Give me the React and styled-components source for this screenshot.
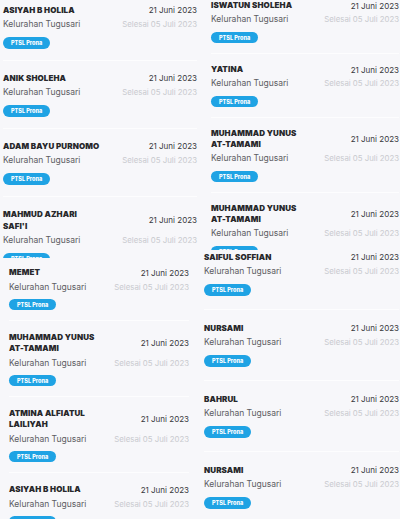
import styled, { createGlobalStyle } from "styled-components";

const GlobalStyle = createGlobalStyle`
  html, body { margin: 0; padding: 0; }
  body {
    background: #f7f7fa;
    font-family: Inter, "Open Sans", sans-serif;
    width: 400px;
    height: 519px;
    overflow: hidden;
  }
`;

const Page = styled.div`
  display: grid;
  grid-template-columns: 200px 200px;
  width: 400px;
  height: 519px;
  overflow: hidden;
`;

const Column = styled.div`
  display: flex;
  flex-direction: column;
`;

const Panel = styled.section`
  height: ${(p) => p.$h}px;
  margin-left: ${(p) => p.$ml || 0}px;
  margin-right: ${(p) => p.$mr || 0}px;
  padding: 0 ${(p) => p.$pr}px 0 ${(p) => p.$pl}px;
  background: #f7f7fa;
  overflow: hidden;
  flex-shrink: 0;
`;

const List = styled.div`
  margin-top: ${(p) => p.$offset}px;
  display: flex;
  flex-direction: column;
`;

const Card = styled.div`
  padding: ${(p) => p.$pt}px 0 ${(p) => p.$pb}px;
  border-bottom: 1px solid #fdfdfe;
  display: flex;
  flex-direction: column;
`;

const Row = styled.div`
  display: flex;
  justify-content: space-between;
  align-items: center;
  gap: 8px;
  margin-top: ${(p) => p.$mt || 0}px;
`;

const Name = styled.div`
  font-weight: 900;
  font-size: 8px;
  line-height: ${(p) => p.$lh}px;
  color: #28282b;
  text-transform: uppercase;
  white-space: pre-line;
  letter-spacing: 0.1px;
`;

const DateText = styled.div`
  font-size: 8px;
  color: #38383c;
  white-space: nowrap;
`;

const Sub = styled.div`
  font-size: 8.5px;
  line-height: 12px;
  color: #5c5c62;
  white-space: nowrap;
`;

const Done = styled.div`
  font-size: 7.8px;
  line-height: 12px;
  color: #c9cacf;
  white-space: nowrap;
`;

const Badge = styled.span`
  align-self: flex-start;
  margin-top: ${(p) => p.$mt}px;
  height: ${(p) => p.$h}px;
  padding: 0 8px;
  border-radius: 7px;
  background: #1fa3e4;
  color: #fff;
  font-size: 5.5px;
  font-weight: 800;
  display: flex;
  align-items: center;
`;

const panels = [
  {
    key: "tl", col: 0, h: 258, ml: 0, pl: 3, pr: 3, offset: -7,
    pt: 11, pb: 11, lh: 12, subGap: 2, badgeGap: 7, badgeH: 12,
    names: ["ASIYAH B HOLILA", "ANIK SHOLEHA", "ADAM BAYU PURNOMO", "MAHMUD AZHARI\nSAFI'I"],
  },
  {
    key: "bl", col: 0, h: 261, ml: 5, mr: 11, pl: 4, pr: 0, offset: -2,
    pt: 11, pb: 10, lh: 11, subGap: 3, badgeGap: 6, badgeH: 11,
    names: ["MEMET", "MUHAMMAD YUNUS\nAT-TAMAMI", "ATMINA ALFIATUL\nLAILIYAH", "ASIYAH B HOLILA"],
  },
  {
    key: "tr", col: 1, h: 250, ml: 5, pl: 6, pr: 1, offset: -10,
    pt: 10, pb: 10, lh: 11, subGap: 2, badgeGap: 7, badgeH: 11,
    names: ["ISWATUN SHOLEHA", "YATINA", "MUHAMMAD YUNUS\nAT-TAMAMI", "MUHAMMAD YUNUS\nAT-TAMAMI"],
  },
  {
    key: "br", col: 1, h: 269, ml: 0, pl: 4, pr: 1, offset: -11,
    pt: 12, pb: 13, lh: 12, subGap: 2, badgeGap: 7, badgeH: 12,
    names: ["SAIFUL SOFFIAN", "NURSAMI", "BAHRUL", "NURSAMI"],
  },
];

function Entry({ name, cfg }) {
  return (
    <Card $pt={cfg.pt} $pb={cfg.pb}>
      <Row>
        <Name $lh={cfg.lh}>{name}</Name>
        <DateText>21 Juni 2023</DateText>
      </Row>
      <Row $mt={cfg.subGap}>
        <Sub>Kelurahan Tugusari</Sub>
        <Done>Selesai 05 Juli 2023</Done>
      </Row>
      <Badge $mt={cfg.badgeGap} $h={cfg.badgeH}>PTSL Prona</Badge>
    </Card>
  );
}

function ListPanel({ cfg }) {
  return (
    <Panel $h={cfg.h} $ml={cfg.ml} $mr={cfg.mr} $pl={cfg.pl} $pr={cfg.pr}>
      <List $offset={cfg.offset}>
        {cfg.names.map((n, i) => (
          <Entry key={i} name={n} cfg={cfg} />
        ))}
      </List>
    </Panel>
  );
}

export default function App() {
  return (
    <>
      <GlobalStyle />
      <Page>
        {[0, 1].map((c) => (
          <Column key={c}>
            {panels.filter((p) => p.col === c).map((p) => (
              <ListPanel key={p.key} cfg={p} />
            ))}
          </Column>
        ))}
      </Page>
    </>
  );
}
